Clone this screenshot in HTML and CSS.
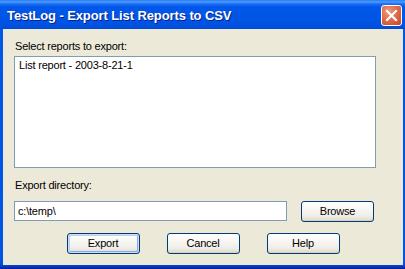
FILE: index.html
```html
<!DOCTYPE html>
<html>
<head>
<meta charset="utf-8">
<link rel="stylesheet" href="styles.css">
</head>
<body>
<div class="window">
  <div class="titlebar">
    <span class="title">TestLog - Export List Reports to CSV</span>
    <span class="close">
      <svg width="21" height="21" viewBox="0 0 21 21">
        <path d="M6 6 L15 15 M15 6 L6 15" stroke="#fff" stroke-width="2.2" stroke-linecap="square" fill="none"/>
      </svg>
    </span>
  </div>
  <div class="body">
    <div class="label">Select reports to export:</div>
    <div class="listbox">
      <div class="item">List report - 2003-8-21-1</div>
    </div>
    <div class="label label-dir">Export directory:</div>
    <div class="dir-row">
      <div class="input">c:\temp\</div>
      <button class="btn">Browse</button>
    </div>
    <div class="btn-row">
      <button class="btn default">Export</button>
      <button class="btn">Cancel</button>
      <button class="btn">Help</button>
    </div>
  </div>
</div>
</body>
</html>
```

FILE: styles.css
```css
html, body {
  margin: 0;
  padding: 0;
}
body {
  width: 405px;
  height: 269px;
  overflow: hidden;
  font-family: "Liberation Sans", Arial, sans-serif;
  font-size: 11px;
  letter-spacing: -0.2px;
  color: #000;
}
.window {
  width: 405px;
  height: 269px;
  display: flex;
  flex-direction: column;
  background: linear-gradient(to bottom, #0058E6 0, #0055E5 262px, #0840C8 266px, #001E9A 269px);
  box-sizing: border-box;
}
.titlebar {
  height: 29px;
  flex: none;
  display: flex;
  justify-content: space-between;
  align-items: flex-start;
  padding: 0 3px 0 7px;
  background: linear-gradient(to bottom, #2C7DF0 0, #4C9BFF 2px, #1A6CF4 4px, #0058EA 7px, #0055E5 16px, #0053E2 24px, #004AD8 29px);
}
.title {
  margin-top: 8px;
  color: #fff;
  font-weight: bold;
  font-size: 13px;
  line-height: 15px;
  letter-spacing: -0.1px;
  text-shadow: 1px 1px 0 #0A1E8A;
  white-space: nowrap;
}
.close {
  margin-top: 5px;
  width: 21px;
  height: 21px;
  box-sizing: border-box;
  border: 1px solid #fff;
  border-radius: 3px;
  background: radial-gradient(circle at 35% 30%, #EE9A7E 0, #E06D4C 45%, #C8442A 100%);
  display: flex;
}
.close svg {
  margin: -1px;
}
.body {
  flex: 1;
  margin: 0 2px 4px 3px;
  background: #ECE9D8;
  padding: 11px 0 11px 11px;
  display: flex;
  flex-direction: column;
}
.label {
  line-height: 13px;
  height: 13px;
  padding-left: 1px;
  white-space: nowrap;
}
.listbox {
  margin-top: 3px;
  width: 362px;
  height: 112px;
  box-sizing: border-box;
  border: 1px solid #7F9DB9;
  background: #fff;
  padding: 2px 4px;
}
.item {
  line-height: 13px;
}
.label-dir {
  margin-top: 11px;
}
.dir-row {
  margin-top: 9px;
  display: flex;
  align-items: flex-start;
  gap: 14px;
  height: 21px;
}
.input {
  width: 273px;
  height: 20px;
  box-sizing: border-box;
  border: 1px solid #7F9DB9;
  background: #fff;
  padding: 0 3px;
  line-height: 18px;
}
.btn {
  width: 73px;
  height: 21px;
  box-sizing: border-box;
  border: 1px solid #003C74;
  border-radius: 3px;
  background: linear-gradient(to bottom, #FFFFFF 0, #F7F6F2 40%, #EFEDE6 75%, #DCD8CC 100%);
  box-shadow: inset 0 -1px 0 #D6D0C5;
  font-family: "Liberation Sans", Arial, sans-serif;
  font-size: 11px;
  letter-spacing: -0.2px;
  color: #000;
  padding: 0;
  margin: 0;
  line-height: 19px;
  text-align: center;
}
.btn-row {
  margin-top: 11px;
  margin-left: -11px;
  display: flex;
  justify-content: center;
  gap: 27px;
}
.btn.default {
  box-shadow: inset 0 0 0 1px #CEDCF5, inset 1px 1px 0 1px #B9CEF5, inset -1px -1px 0 1px #8BABE8;
}
```
